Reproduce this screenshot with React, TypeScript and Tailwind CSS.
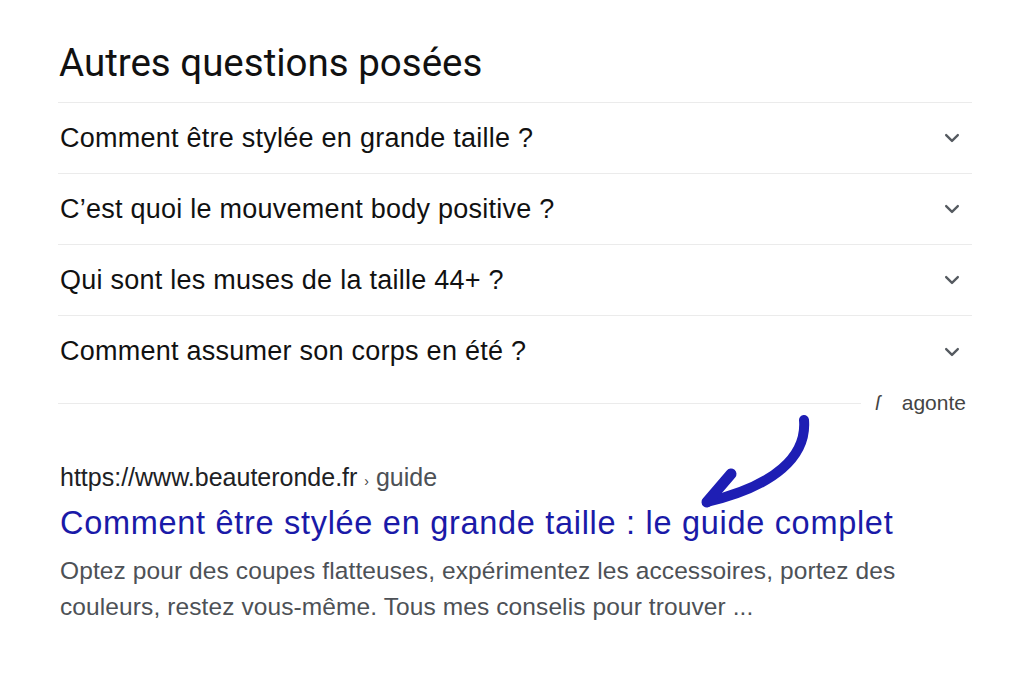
import React from "react";

const questions = [
  "Comment être stylée en grande taille ?",
  "C’est quoi le mouvement body positive ?",
  "Qui sont les muses de la taille 44+ ?",
  "Comment assumer son corps en été ?",
];

const Chevron = () => (
  <svg width="20" height="20" viewBox="0 0 24 24" fill="none">
    <path d="M5 8.5l7 7 7-7" stroke="#555a60" strokeWidth="2.8" strokeLinecap="round" strokeLinejoin="round" />
  </svg>
);

export default function App() {
  return (
    <div className="relative w-[1024px] h-[683px] bg-white overflow-hidden font-['Liberation_Sans',Arial,sans-serif]">
      <div className="pl-[58px] pr-[52px] pt-[40px]">
        <h2 className="text-[38.5px] leading-[46px] text-[#111] font-['Roboto',sans-serif] pl-[1px] pb-[16px]">
          Autres questions posées
        </h2>
        <div className="border-t border-[#ebebeb]">
          {questions.map((q, i) => (
            <div
              key={q}
              className={`flex items-center justify-between h-[71px] pl-[2px] pr-[10px] ${
                i < questions.length - 1 ? "border-b border-[#ebebeb]" : ""
              }`}
            >
              <span className="text-[27px] tracking-[0.25px] text-[#111]">{q}</span>
              <Chevron />
            </div>
          ))}
        </div>
        <div className="flex items-center h-[32px] pr-[6px]">
          <div className="flex-1 border-t border-[#ebebeb] mr-[14px]"></div>
          <span className="text-[#444] text-[20px] mr-[22px] italic">ſ</span>
          <span className="text-[21px] text-[#444]">agonte</span>
        </div>
        <div className="pt-[43px] pl-[2px]">
          <div className="text-[25px] text-[#202124] leading-[30px]">
            https://www.beauteronde.fr <span className="text-[14px] text-[#444]">›</span>{" "}
            <span className="text-[#4d5156]">guide</span>
          </div>
          <div className="text-[32.5px] tracking-[0.7px] text-[#1a1aa8] leading-[40px] mt-[7px]">
            Comment être stylée en grande taille : le guide complet
          </div>
          <p className="text-[24.5px] tracking-[0.1px] text-[#4d5156] leading-[36px] mt-[10px]">
            Optez pour des coupes flatteuses, expérimentez les accessoires, portez des
            <br />
            couleurs, restez vous-même. Tous mes conselis pour trouver ...
          </p>
        </div>
      </div>
      <svg className="absolute left-[695px] top-[410px]" width="120" height="105" viewBox="0 0 120 105">
        <path
          d="M109 10 C112 46 80 76 12 92"
          stroke="#1e1eb4"
          strokeWidth="10"
          fill="none"
          strokeLinecap="round"
        />
        <path d="M36 64 L12 92" stroke="#1e1eb4" strokeWidth="11" fill="none" strokeLinecap="round" />
      </svg>
    </div>
  );
}
